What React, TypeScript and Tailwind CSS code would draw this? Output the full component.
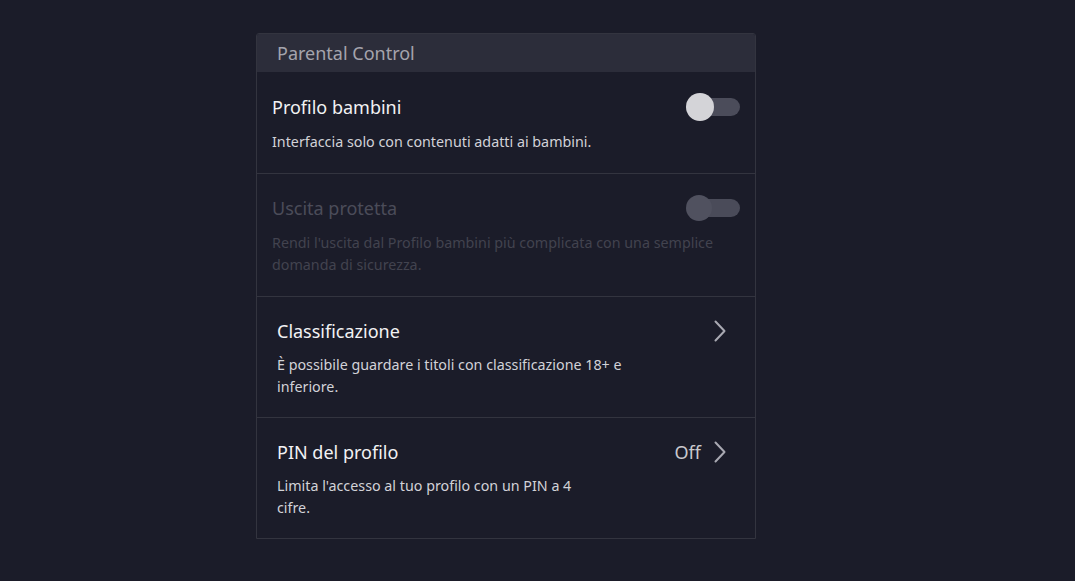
import React from "react";

function Toggle({ disabled }: { disabled?: boolean }) {
  return (
    <div className="relative h-[28px] w-[54px] shrink-0">
      <div
        className={
          "absolute right-0 top-[5px] h-[18px] w-[50px] rounded-full " +
          (disabled ? "bg-[#4a4b59]" : "bg-[#4b4c5a]")
        }
      />
      <div
        className={
          "absolute left-0 rounded-full " +
          (disabled
            ? "top-[1px] h-[26px] w-[26px] bg-[#50515f]"
            : "top-0 h-[28px] w-[28px] bg-[#d4d4d8]")
        }
      />
    </div>
  );
}

function Chevron() {
  return (
    <svg width="12" height="22" viewBox="0 0 12 22" fill="none" className="shrink-0">
      <path d="M1.5 1.5 L10.5 11 L1.5 20.5" stroke="#a9a9b2" strokeWidth="2" strokeLinecap="round" strokeLinejoin="round" />
    </svg>
  );
}

export default function App() {
  return (
    <div
      className="min-h-[581px] w-full bg-[#1b1c29] pt-[33px] pl-[256px]"
      style={{ fontFamily: '"Noto Sans", "Open Sans", sans-serif' }}
    >
      <div className="w-[500px] overflow-hidden rounded-t-[3px] border border-[#33343f] bg-[#1b1c29]">
        <div className="flex h-[38px] items-center bg-[#2c2d3a] pl-[20px] text-[18px] text-[#a4a4ad]">
          Parental Control
        </div>

        <div className="flex flex-col border-b border-[#33343f] pl-[15px] pr-[15px] pt-[21px] pb-[20px]">
          <div className="flex items-center justify-between">
            <div className="text-[18px] leading-[24px] text-[#f2f2f4]">Profilo bambini</div>
            <Toggle />
          </div>
          <div className="mt-[10px] text-[14.3px] leading-[22px] text-[#d2d2d8]">
            Interfaccia solo con contenuti adatti ai bambini.
          </div>
        </div>

        <div className="flex flex-col border-b border-[#33343f] pl-[15px] pr-[15px] pt-[20px] pb-[20px]">
          <div className="flex items-center justify-between">
            <div className="text-[18px] leading-[24px] text-[#4b4c59]">Uscita protetta</div>
            <Toggle disabled />
          </div>
          <div className="mt-[10px] max-w-[470px] text-[14.3px] leading-[22px] text-[#42434f]">
            Rendi l'uscita dal Profilo bambini più complicata con una semplice domanda di sicurezza.
          </div>
        </div>

        <div className="flex items-start justify-between border-b border-[#33343f] pl-[20px] pr-[29px] pt-[22px] pb-[19px]">
          <div className="flex flex-col">
            <div className="text-[18px] leading-[24px] text-[#f2f2f4]">Classificazione</div>
            <div className="mt-[11px] max-w-[365px] text-[14.3px] leading-[22px] text-[#d2d2d8]">
              È possibile guardare i titoli con classificazione 18+ e inferiore.
            </div>
          </div>
          <div className="mt-[1px]">
            <Chevron />
          </div>
        </div>

        <div className="flex items-start justify-between pl-[20px] pr-[29px] pt-[22px] pb-[19px]">
          <div className="flex flex-col">
            <div className="text-[18px] leading-[24px] text-[#f2f2f4]">PIN del profilo</div>
            <div className="mt-[11px] max-w-[312px] text-[14.3px] leading-[22px] text-[#d2d2d8]">
              Limita l'accesso al tuo profilo con un PIN a 4 cifre.
            </div>
          </div>
          <div className="flex items-center gap-[13px]">
            <span className="text-[18px] leading-[24px] text-[#c9c9ce]">Off</span>
            <Chevron />
          </div>
        </div>
      </div>
    </div>
  );
}
